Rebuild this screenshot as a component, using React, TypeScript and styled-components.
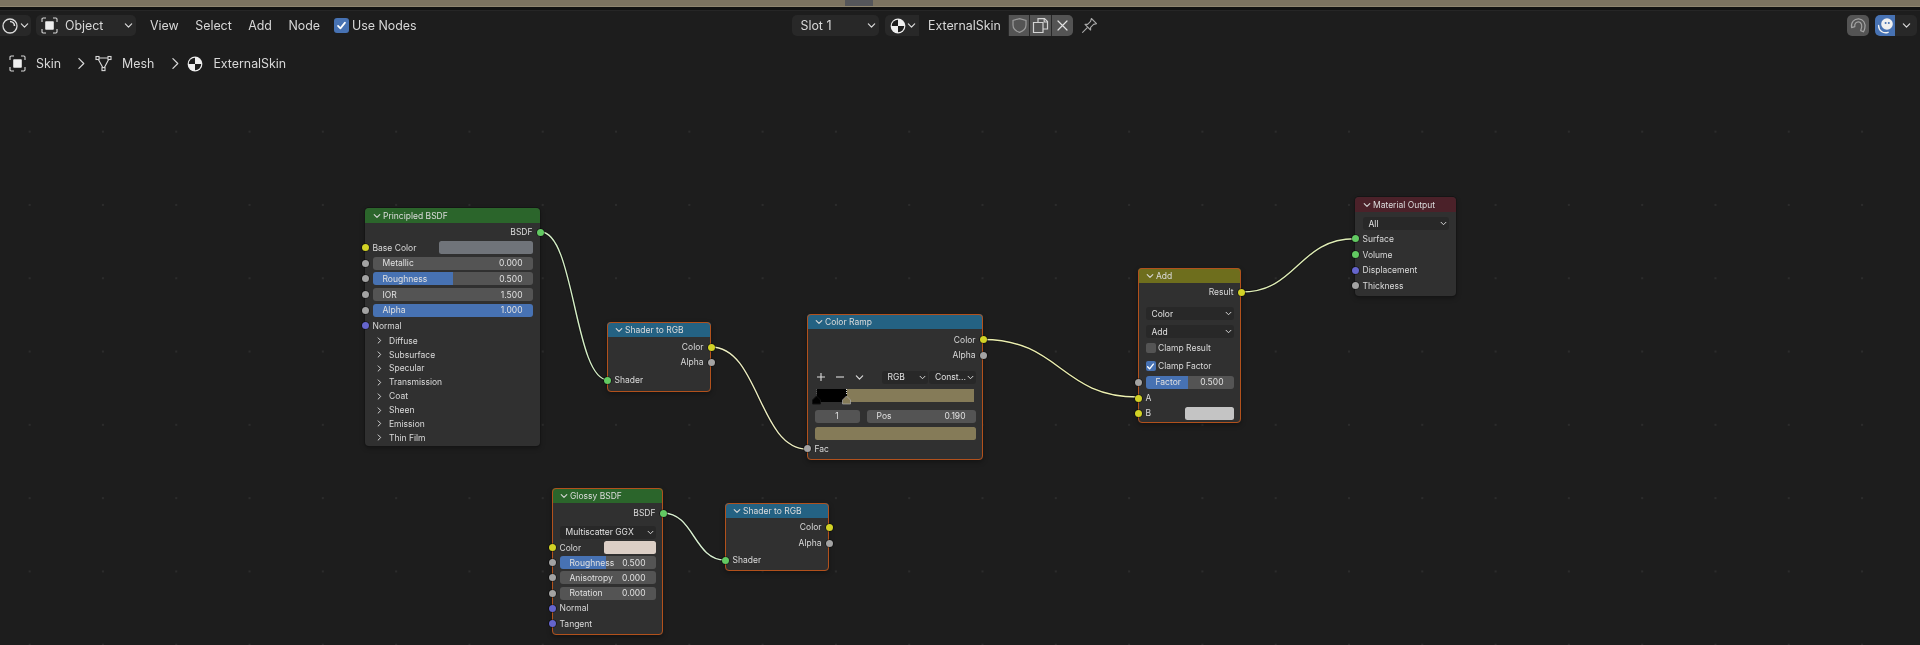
import React from "react";
import styled, { createGlobalStyle } from "styled-components";

const Global = createGlobalStyle`
  html, body { margin: 0; padding: 0; background: #1d1d1d; }
  body { font-family: Inter, "Noto Sans", "Liberation Sans", sans-serif; }
`;

const CANVAS_TOP = 80;

const Page = styled.div`
  width: 1920px;
  height: 645px;
  display: flex;
  flex-direction: column;
  overflow: hidden;
  background: #1d1d1d;
  color: #d8d8d8;
  filter: blur(0.3px);
`;
const TopStrip = styled.div`
  height: 7px;
  flex: none;
  background: #7c7360;
  border-bottom: 1px solid #8f8670;
  box-sizing: border-box;
  padding-left: 845px;
`;
const StripTab = styled.div`
  width: 28px;
  height: 100%;
  background: #55565a;
`;
const StripShadow = styled.div`
  height: 4px;
  flex: none;
  background: #111;
  border-bottom: 1px solid #262626;
  box-sizing: border-box;
`;
const Toolbar = styled.div`
  height: 36px;
  flex: none;
  display: flex;
  align-items: flex-start;
  padding-top: 4px;
  box-sizing: border-box;
  font-size: 12.4px;
`;
const ToolLeft = styled.div`
  width: 792px;
  flex: none;
  display: flex;
  align-items: center;
  height: 21px;
`;
const ToolCenter = styled.div`
  display: flex;
  align-items: center;
  height: 21px;
`;
const ToolRight = styled.div`
  margin-left: auto;
  margin-right: 3px;
  display: flex;
  align-items: center;
  height: 21px;
`;
const EditorButton = styled.div`
  width: 31px;
  height: 21px;
  background: #282828;
  border-radius: 0 5px 5px 0;
  display: flex;
  align-items: center;
  padding-left: 1px;
  box-sizing: border-box;
  gap: 1px;
`;
const ToolDropdown = styled.div<{ $w: number; $ml?: number }>`
  width: ${({ $w }) => $w}px;
  margin-left: ${({ $ml }) => $ml || 0}px;
  height: 21px;
  background: #282828;
  border-radius: 5px;
  display: flex;
  align-items: center;
  box-sizing: border-box;
  padding: 0 3px 0 5px;
  gap: 7px;
  & > span { flex: 1; }
`;
const MenuGroup = styled.div`
  display: flex;
  gap: 16.5px;
  margin-left: 14px;
`;
const CheckWrap = styled.div`
  display: flex;
  align-items: center;
  gap: 3.5px;
  margin-left: 13.5px;
`;
const ToolCheck = styled.div`
  width: 15px;
  height: 15px;
  border-radius: 3px;
  background: #4772b3;
  display: flex;
  align-items: center;
  justify-content: center;
`;
const MaterialBlock = styled.div`
  display: flex;
  height: 21px;
  margin-left: 6px;
  border-radius: 5px;
  overflow: hidden;
  background: #282828;
`;
const MaterialPicker = styled.div`
  width: 34px;
  display: flex;
  align-items: center;
  padding-left: 5px;
  box-sizing: border-box;
  gap: 1px;
`;
const MaterialName = styled.div`
  width: 89px;
  background: #1d1d1d;
  display: flex;
  align-items: center;
  padding-left: 9px;
  box-sizing: border-box;
`;
const SquareButton = styled.div<{ $w?: number }>`
  width: ${({ $w }) => $w || 21}px;
  background: #545454;
  margin-left: 1px;
  display: flex;
  align-items: center;
  justify-content: center;
`;
const PinWrap = styled.div`
  margin-left: 8px;
  display: flex;
`;
const SnapButton = styled.div`
  width: 22px;
  height: 21px;
  border-radius: 5px;
  background: #545454;
  display: flex;
  align-items: center;
  justify-content: center;
`;
const ShadingGroup = styled.div`
  display: flex;
  height: 21px;
  margin-left: 6px;
  border-radius: 5px;
  overflow: hidden;
`;
const ShadingActive = styled.div`
  width: 20px;
  background: #4772b3;
  display: flex;
  align-items: center;
  justify-content: center;
`;
const ShadingMenu = styled.div`
  width: 22px;
  background: #282828;
  display: flex;
  align-items: center;
  justify-content: center;
`;
const Breadcrumb = styled.div`
  height: 33px;
  flex: none;
  display: flex;
  align-items: center;
  padding-left: 9px;
  font-size: 12.4px;
`;
const CrumbLabel = styled.span`
  margin-left: 10px;
`;
const CrumbArrow = styled.span<{ $ml: number; $mr: number }>`
  display: flex;
  margin: 0 ${({ $mr }) => $mr}px 0 ${({ $ml }) => $ml}px;
`;

const Canvas = styled.div`
  position: relative;
  flex: 1;
  background-image: radial-gradient(circle at 50% 50%, #2c2c2c 0, #2c2c2c 0.8px, transparent 1.2px);
  background-size: 73.3px 73.3px;
  background-position: -7px 15px;
`;
const Wires = styled.svg`
  position: absolute;
  left: 0;
  top: 0;
  width: 1920px;
  height: 565px;
  z-index: 2;
  pointer-events: none;
`;
const NodeBox = styled.div<{ $x: number; $y: number; $w: number; $h: number; $selected?: boolean }>`
  position: absolute;
  left: ${({ $x }) => $x}px;
  top: ${({ $y }) => $y - CANVAS_TOP}px;
  width: ${({ $w }) => $w}px;
  height: ${({ $h }) => $h}px;
  background: #303030;
  border-radius: 4px;
  font-size: 8.5px;
  color: #dadada;
  z-index: 3;
  box-shadow: 0 0 0 ${({ $selected }) => ($selected ? "0" : "1px")} #151515, 0 2px 5px rgba(0, 0, 0, 0.35);
  &::after {
    content: "";
    position: absolute;
    inset: 0;
    border-radius: 4px;
    border: ${({ $selected }) => ($selected ? "1.3px solid #b2511c" : "none")};
    pointer-events: none;
    z-index: 1;
  }
`;
const NodeHeader = styled.div<{ $bg: string }>`
  height: 15px;
  background: ${({ $bg }) => $bg};
  border-radius: 4px 4px 0 0;
  display: flex;
  align-items: center;
  gap: 2px;
  padding-left: 8px;
  color: #dcdcdc;
`;
const Row = styled.div<{ $h?: number; $mt?: number; $right?: boolean }>`
  position: relative;
  height: ${({ $h }) => $h || 15}px;
  margin-top: ${({ $mt }) => $mt || 0}px;
  padding: 0 7.5px;
  display: flex;
  align-items: center;
  justify-content: ${({ $right }) => ($right ? "flex-end" : "flex-start")};
  box-sizing: border-box;
`;
const Socket = styled.i<{ $c: string; $right?: boolean }>`
  position: absolute;
  top: 50%;
  ${({ $right }) => ($right ? "right: -3.5px;" : "left: -3.5px;")}
  width: 7px;
  height: 7px;
  margin-top: -3.5px;
  border-radius: 50%;
  background: ${({ $c }) => $c};
  box-shadow: 0 0 0 0.6px rgba(0, 0, 0, 0.7);
  z-index: 2;
`;
const Field = styled.div<{ $fill?: number; $ml?: number }>`
  flex: 1;
  height: 13px;
  margin-left: ${({ $ml }) => $ml || 0}px;
  border-radius: 3px;
  padding: 0 10px;
  display: flex;
  align-items: center;
  justify-content: space-between;
  color: #e0e0e0;
  ${({ $fill }) =>
    $fill !== undefined
      ? `background: linear-gradient(90deg, #4772b3 ${$fill}%, #545454 ${$fill}%);`
      : "background: #545454;"}
`;
const StepField = styled.div<{ $w: number }>`
  width: ${({ $w }) => $w}px;
  flex: none;
  height: 13px;
  border-radius: 3px;
  background: #545454;
  display: flex;
  align-items: center;
  justify-content: center;
  color: #e0e0e0;
`;
const Swatch = styled.div<{ $c: string; $w: number; $ml?: boolean }>`
  width: ${({ $w }) => $w}px;
  ${({ $ml }) => ($ml ? "margin-left: auto;" : "")}
  height: 13px;
  border-radius: 2.5px;
  background: ${({ $c }) => $c};
  flex: none;
`;
const WideSwatch = styled.div<{ $c: string }>`
  flex: 1;
  height: 13px;
  border-radius: 2.5px;
  background: ${({ $c }) => $c};
`;
const Select = styled.div`
  flex: 1;
  height: 13px;
  border-radius: 3px;
  background: #282828;
  display: flex;
  align-items: center;
  justify-content: space-between;
  padding: 0 2px 0 6px;
  color: #e0e0e0;
`;
const PanelRow = styled.div`
  height: 13.86px;
  display: flex;
  align-items: center;
  padding-left: 11px;
  gap: 6px;
`;
const NodeCheck = styled.div<{ $on?: boolean }>`
  width: 10px;
  height: 10px;
  border-radius: 2px;
  background: ${({ $on }) => ($on ? "#4772b3" : "#545454")};
  margin-right: 2.5px;
  display: flex;
  align-items: center;
  justify-content: center;
`;
const RampTools = styled.div`
  display: flex;
  align-items: center;
  width: 100%;
`;
const RampIcons = styled.div`
  display: flex;
  align-items: center;
  gap: 11px;
  padding-left: 2px;
  width: 67px;
  flex: none;
  box-sizing: border-box;
`;
const RampSelects = styled.div`
  display: flex;
  flex: 1;
  gap: 1px;
`;
const RampBar = styled.div`
  position: relative;
  width: 157px;
  height: 13px;
  margin-left: 2px;
  background: linear-gradient(90deg, #000 19%, #857b58 19%);
`;
const RampHandle = styled.svg<{ $x: number }>`
  position: absolute;
  left: ${({ $x }) => $x}px;
  top: -1px;
`;

type IconProps = { size?: number; color?: string };

const Chevron = ({ size = 8, color = "#d8d8d8" }: IconProps) => (
  <svg width={size} height={size} viewBox="0 0 8 8" fill="none" stroke={color} strokeWidth="1.1" strokeLinecap="round" strokeLinejoin="round">
    <path d="M1.2 2.6 4 5.4 6.8 2.6" />
  </svg>
);
const ChevronRight = ({ size = 8, color = "#d8d8d8" }: IconProps) => (
  <svg width={size} height={size} viewBox="0 0 8 8" fill="none" stroke={color} strokeWidth={size > 10 ? 0.75 : 1.1} strokeLinecap="round" strokeLinejoin="round">
    <path d="M2.4 1 5.4 4 2.4 7" />
  </svg>
);
const ObjectIcon = () => (
  <svg width="17" height="17" viewBox="0 0 17 17" fill="none" stroke="#d8d8d8" strokeWidth="1.1">
    <path d="M1 5V2.2Q1 1 2.2 1H5M12 1h2.8Q16 1 16 2.2V5M16 12v2.8q0 1.2-1.2 1.2H12M5 16H2.2Q1 16 1 14.8V12" />
    <rect x="4.2" y="4.2" width="8.6" height="8.6" rx="0.8" fill="#eee" stroke="none" />
  </svg>
);
const MeshIcon = () => (
  <svg width="17" height="17" viewBox="0 0 17 17" fill="none" stroke="#d8d8d8" strokeWidth="1.1">
    <path d="M2.6 3h11.8L8.6 14 2.6 3Z" />
    <rect x="1" y="1.5" width="3" height="3" fill="#1d1d1d" />
    <rect x="13" y="1.5" width="3" height="3" fill="#1d1d1d" />
    <rect x="7" y="12.6" width="3" height="3" fill="#1d1d1d" />
  </svg>
);
const MaterialIcon = ({ size = 16 }: { size?: number }) => (
  <svg width={size} height={size} viewBox="0 0 16 16">
    <circle cx="8" cy="8" r="7.4" fill="#eee" />
    <path d="M8 1.800A6.200 6.200 0 0 0 1.800 8H8V1.800Z" fill="#1d1d1d" />
    <path d="M8 8h6.200A6.200 6.200 0 0 1 8 14.200V8Z" fill="#1d1d1d" />
  </svg>
);
const ShaderEditorIcon = () => (
  <svg width="18" height="18" viewBox="0 0 18 18" fill="none" stroke="#dcdcdc" strokeWidth="1.3">
    <circle cx="9" cy="9" r="7" />
    <path d="M9 4.5A4.5 4.5 0 0 1 13.5 9" strokeWidth="1.6" />
  </svg>
);
const ShieldIcon = () => (
  <svg width="17" height="17" viewBox="0 0 17 17" fill="none" stroke="#9a9a9a" strokeWidth="1.2">
    <path d="M8.5 1.6 15 3.4V8c0 3.6-2.6 6-6.5 7.4C4.6 14 2 11.6 2 8V3.4L8.5 1.6Z" />
  </svg>
);
const CopyIcon = () => (
  <svg width="17" height="17" viewBox="0 0 17 17" fill="none" stroke="#d4d4d4" strokeWidth="1.2">
    <path d="M6 5V1.6h6.5L15.5 4.6V12H11" />
    <path d="M1.5 5.5h9.5v10H1.5z" />
    <path d="M12.2 1.8V5h3.2" />
  </svg>
);
const CloseIcon = () => (
  <svg width="13" height="13" viewBox="0 0 13 13" fill="none" stroke="#e2e2e2" strokeWidth="1.2" strokeLinecap="round">
    <path d="M2 2l9 9M11 2l-9 9" />
  </svg>
);
const PinIcon = () => (
  <svg width="17" height="17" viewBox="0 0 17 17" fill="none" stroke="#a8a8a8" strokeWidth="1.1" strokeLinejoin="round" strokeLinecap="round">
    <path d="M10.4 1.5 15.5 6.6 12.6 7.4 9.6 10.4 9.6 13 4 7.4 6.6 7.4 9.6 4.4Z" />
    <path d="M6.3 10.7 1.6 15.4" />
  </svg>
);
const SnapIcon = () => (
  <svg width="17" height="17" viewBox="0 0 17 17" fill="none" stroke="#a3a3a3" strokeWidth="1.2" strokeLinecap="round" strokeLinejoin="round">
    <path d="M1.6 10.6C.6 5.400 4.400 1.500 8.800 1.800c4.400.3 7.200 4.400 6 9.600-.3 1.400-.8 2.600-1.500 3.400l-2.600-1.200c.9-2 1.500-4.200.9-6C11 6 9.800 4.800 8.400 4.800c-2.400 0-4 2.200-3.600 4.800L1.600 10.600Z" />
  </svg>
);
const ShadingIcon = () => (
  <svg width="17" height="17" viewBox="0 0 17 17" fill="none">
    <circle cx="10" cy="7" r="5.8" fill="#f0f0f0" />
    <circle cx="8.6" cy="6" r="1" fill="#4772b3" />
    <circle cx="11.800" cy="6" r="1" fill="#4772b3" />
    <path d="M1.6 8.500a7 7 0 0 0 9.500 6.800" stroke="#f0f0f0" strokeWidth="1.4" strokeLinecap="round" />
  </svg>
);
const TickIcon = ({ size = 11 }: { size?: number }) => (
  <svg width={size} height={size} viewBox="0 0 11 11" fill="none" stroke="#fff" strokeWidth="1.7" strokeLinecap="round" strokeLinejoin="round">
    <path d="M2 5.800 4.400 8.400 9 2.600" />
  </svg>
);

const YELLOW = "#d2d226";
const GRAY = "#a3a3a3";
const GREEN = "#62c962";
const PURPLE = "#6565cc";

const Output = ({ label, c, h, mt }: { label: string; c: string; h?: number; mt?: number }) => (
  <Row $right $h={h} $mt={mt}>
    {label}
    <Socket $c={c} $right />
  </Row>
);
const Input = ({ label, c, h, mt }: { label: string; c: string; h?: number; mt?: number }) => (
  <Row $h={h} $mt={mt}>
    <Socket $c={c} />
    {label}
  </Row>
);
const Slider = ({ label, value, fill, h, mt }: { label: string; value: string; fill?: number; h?: number; mt?: number }) => (
  <Row $h={h} $mt={mt}>
    <Socket $c={GRAY} />
    <Field $fill={fill}>
      <span>{label}</span>
      <span>{value}</span>
    </Field>
  </Row>
);
const Dropdown = ({ label, h, mt }: { label: string; h?: number; mt?: number }) => (
  <Row $h={h || 13} $mt={mt}>
    <Select>
      {label}
      <Chevron size={7} />
    </Select>
  </Row>
);
const Header = ({ title, bg }: { title: string; bg: string }) => (
  <NodeHeader $bg={bg}>
    <Chevron />
    {title}
  </NodeHeader>
);
const Panel = ({ label }: { label: string }) => (
  <PanelRow>
    <ChevronRight size={7} />
    {label}
  </PanelRow>
);

const GREEN_HEAD = "#2b652b";
const TEAL_HEAD = "#246283";
const OLIVE_HEAD = "#6e6e1d";
const OUTPUT_HEAD = "#4b2129";

const ShaderToRgb = ({ x, y, h, first, second, third }: { x: number; y: number; h: number; first: number; second: number; third: number }) => (
  <NodeBox $x={x} $y={y} $w={104} $h={h} $selected>
    <Header title="Shader to RGB" bg={TEAL_HEAD} />
    <Output label="Color" c={YELLOW} mt={first} />
    <Output label="Alpha" c={GRAY} mt={second} />
    <Input label="Shader" c={GREEN} mt={third} />
  </NodeBox>
);

const Wire = ({ d, c }: { d: string; c: string }) => (
  <>
    <path d={d} fill="none" stroke="#141414" strokeWidth="3" />
    <path d={d} fill="none" stroke={c} strokeWidth="1.4" />
  </>
);

const curve = (x1: number, y1: number, x2: number, y2: number) => {
  const k = (x2 - x1) * 0.5;
  return `M${x1} ${y1}C${x1 + k} ${y1} ${x2 - k} ${y2} ${x2} ${y2}`;
};

export default function App() {
  return (
    <Page>
      <Global />
      <TopStrip>
        <StripTab />
      </TopStrip>
      <StripShadow />
      <Toolbar>
        <ToolLeft>
          <EditorButton>
            <ShaderEditorIcon />
            <Chevron size={9} />
          </EditorButton>
          <ToolDropdown $w={100} $ml={5}>
            <ObjectIcon />
            <span>Object</span>
            <Chevron size={9} />
          </ToolDropdown>
          <MenuGroup>
            <span>View</span>
            <span>Select</span>
            <span>Add</span>
            <span>Node</span>
          </MenuGroup>
          <CheckWrap>
            <ToolCheck>
              <TickIcon />
            </ToolCheck>
            <span>Use Nodes</span>
          </CheckWrap>
        </ToolLeft>
        <ToolCenter>
          <ToolDropdown $w={87}>
            <span>&nbsp;Slot 1</span>
            <Chevron size={9} />
          </ToolDropdown>
          <MaterialBlock>
            <MaterialPicker>
              <MaterialIcon />
              <Chevron size={9} />
            </MaterialPicker>
            <MaterialName>ExternalSkin</MaterialName>
            <SquareButton $w={20}>
              <ShieldIcon />
            </SquareButton>
            <SquareButton>
              <CopyIcon />
            </SquareButton>
            <SquareButton>
              <CloseIcon />
            </SquareButton>
          </MaterialBlock>
          <PinWrap>
            <PinIcon />
          </PinWrap>
        </ToolCenter>
        <ToolRight>
          <SnapButton>
            <SnapIcon />
          </SnapButton>
          <ShadingGroup>
            <ShadingActive>
              <ShadingIcon />
            </ShadingActive>
            <ShadingMenu>
              <Chevron size={9} />
            </ShadingMenu>
          </ShadingGroup>
        </ToolRight>
      </Toolbar>
      <Breadcrumb>
        <ObjectIcon />
        <CrumbLabel>Skin</CrumbLabel>
        <CrumbArrow $ml={14} $mr={7}>
          <ChevronRight size={13} />
        </CrumbArrow>
        <MeshIcon />
        <CrumbLabel>Mesh</CrumbLabel>
        <CrumbArrow $ml={15} $mr={5}>
          <ChevronRight size={13} />
        </CrumbArrow>
        <MaterialIcon />
        <CrumbLabel>ExternalSkin</CrumbLabel>
      </Breadcrumb>
      <Canvas>
        <Wires viewBox={`0 ${CANVAS_TOP} 1920 565`}>
          <Wire d={curve(541, 232, 608, 380)} c="#d5efc6" />
          <Wire d={curve(711, 347, 807, 449)} c="#ecedc0" />
          <Wire d={curve(983, 339.5, 1138, 397)} c="#ecefb0" />
          <Wire d={curve(1241, 292, 1355, 238.7)} c="#dfedb6" />
          <Wire d={curve(663, 513, 725, 560)} c="#d8efd0" />
        </Wires>

        <NodeBox $x={365} $y={208} $w={175} $h={238}>
          <Header title="Principled BSDF" bg={GREEN_HEAD} />
          <Output label="BSDF" c={GREEN} h={15.67} mt={1.2} />
          <Row $h={15.67}>
            <Socket $c={YELLOW} />
            Base Color
            <Swatch $c="#70747a" $w={94} $ml />
          </Row>
          <Slider label="Metallic" value="0.000" h={15.67} />
          <Slider label="Roughness" value="0.500" fill={50} h={15.67} />
          <Slider label="IOR" value="1.500" h={15.67} />
          <Slider label="Alpha" value="1.000" fill={100} h={15.67} />
          <Input label="Normal" c={PURPLE} h={15.67} />
          {["Diffuse", "Subsurface", "Specular", "Transmission", "Coat", "Sheen", "Emission", "Thin Film"].map((p) => (
            <Panel key={p} label={p} />
          ))}
        </NodeBox>

        <ShaderToRgb x={607} y={322} h={70} first={2.5} second={0} third={3} />

        <NodeBox $x={807} $y={314} $w={176} $h={146} $selected>
          <Header title="Color Ramp" bg={TEAL_HEAD} />
          <Output label="Color" c={YELLOW} h={15.4} mt={3} />
          <Output label="Alpha" c={GRAY} h={15.4} />
          <Row $h={13} $mt={8.2}>
            <RampTools>
              <RampIcons>
                <svg width="8" height="8" viewBox="0 0 8 8" stroke="#dcdcdc" strokeWidth="1.1">
                  <path d="M0 4h8M4 0v8" />
                </svg>
                <svg width="8" height="8" viewBox="0 0 8 8" stroke="#dcdcdc" strokeWidth="1.1">
                  <path d="M0 4h8" />
                </svg>
                <Chevron size={9} />
              </RampIcons>
              <RampSelects>
                <Select>
                  RGB
                  <Chevron size={7} />
                </Select>
                <Select>
                  Const...
                  <Chevron size={7} />
                </Select>
              </RampSelects>
            </RampTools>
          </Row>
          <Row $h={13} $mt={5}>
            <RampBar>
              <RampHandle $x={-4.500} width="9" height="18" viewBox="0 0 9 18">
                <path d="M4.500 1v6" stroke="#555" strokeDasharray="1 1" />
                <path d="M.5 12l4-4 4 4v4H.5Z" fill="#000" stroke="#111" />
              </RampHandle>
              <RampHandle $x={25.500} width="9" height="18" viewBox="0 0 9 18">
                <path d="M4.500 1v6" stroke="#ddd" strokeDasharray="1 1" />
                <path d="M.5 12l4-4 4 4v4H.5Z" fill="#857b58" stroke="#aaa" strokeWidth=".7" />
              </RampHandle>
            </RampBar>
          </Row>
          <Row $h={13} $mt={8}>
            <StepField $w={45}>1</StepField>
            <Field $ml={7}>
              <span>Pos</span>
              <span>0.190</span>
            </Field>
          </Row>
          <Row $h={13} $mt={4}>
            <WideSwatch $c="#857b58" />
          </Row>
          <Input label="Fac" c={GRAY} mt={1.500} />
        </NodeBox>

        <NodeBox $x={1138} $y={268} $w={103} $h={155} $selected>
          <Header title="Add" bg={OLIVE_HEAD} />
          <Output label="Result" c={YELLOW} mt={1.5} />
          <Dropdown label="Color" mt={7.5} />
          <Dropdown label="Add" mt={5} />
          <Row $mt={2.5}>
            <NodeCheck />
            Clamp Result
          </Row>
          <Row $mt={3}>
            <NodeCheck $on>
              <TickIcon size={9} />
            </NodeCheck>
            Clamp Factor
          </Row>
          <Slider label="Factor" value="0.500" fill={48} h={13} mt={2} />
          <Input label="A" c={YELLOW} mt={2} />
          <Row>
            <Socket $c={YELLOW} />
            B
            <Swatch $c="#c4c4c4" $w={49} $ml />
          </Row>
        </NodeBox>

        <NodeBox $x={1355} $y={197} $w={101} $h={99}>
          <Header title="Material Output" bg={OUTPUT_HEAD} />
          <Dropdown label="All" mt={5} />
          <Input label="Surface" c={GREEN} h={15.7} mt={1} />
          <Input label="Volume" c={GREEN} h={15.7} />
          <Input label="Displacement" c={PURPLE} h={15.7} />
          <Input label="Thickness" c={GRAY} h={15.7} />
        </NodeBox>

        <NodeBox $x={552} $y={488} $w={111} $h={147} $selected>
          <Header title="Glossy BSDF" bg={GREEN_HEAD} />
          <Output label="BSDF" c={GREEN} mt={2.500} />
          <Dropdown label="Multiscatter GGX" mt={5} />
          <Row $h={15.2} $mt={1.500}>
            <Socket $c={YELLOW} />
            Color
            <Swatch $c="#dccfc6" $w={52} $ml />
          </Row>
          <Slider label="Roughness" value="0.500" fill={48} h={15.2} />
          <Slider label="Anisotropy" value="0.000" h={15.2} />
          <Slider label="Rotation" value="0.000" h={15.2} />
          <Input label="Normal" c={PURPLE} h={15.2} />
          <Input label="Tangent" c={PURPLE} h={15.2} />
        </NodeBox>

        <ShaderToRgb x={725} y={503} h={68} first={1.5} second={1} third={2} />
      </Canvas>
    </Page>
  );
}
